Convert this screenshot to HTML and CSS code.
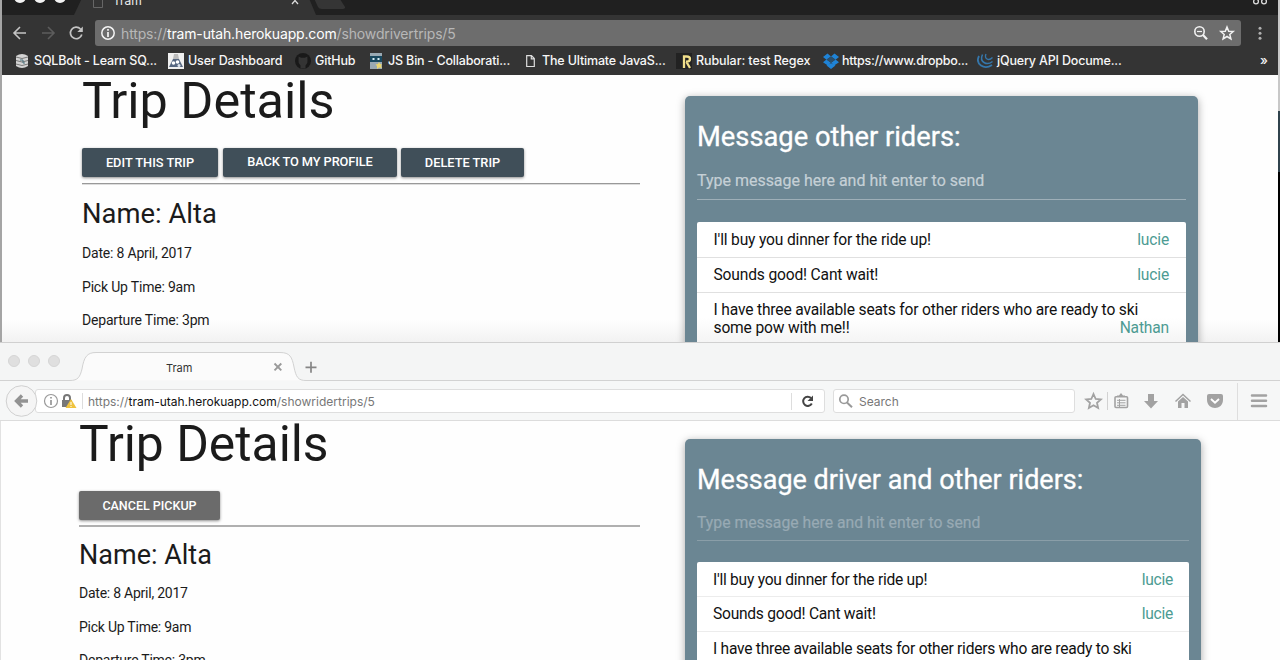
FILE: index.html
```
<!DOCTYPE html>
<html lang="en">
<head>
<meta charset="utf-8">
<title>Tram</title>
<link rel="stylesheet" href="styles.css">
</head>
<body>
<div class="desktop">
  <section class="window driver">
    <div class="edge edge-left"></div>
    <div class="window-body">
      <header class="chrome">
        <div class="chrome-tabs">
          <svg width="1276" height="15" viewBox="2 0 1276 15">
            <path d="M74 15 L83 -4 H308 L316 15Z" fill="#343434"/>
            <path d="M313 -4 H338 L345 7 Q345.500 9 343 9 H322 Q319 9 318 7Z" fill="#353535"/>
            <g fill="#f2f2f2"><circle cx="20" cy="-3" r="6"/><circle cx="40" cy="-3" r="6"/><circle cx="60" cy="-3" r="6"/></g>
            <path d="M93.500 -3 V7.500 H102.500 V-3" fill="none" stroke="#666" stroke-width="1"/>
            <path d="M292 -3 L298 4 M298 -3 L292 4" stroke="#ddd" stroke-width="1.300"/>
            <g fill="none" stroke="#ddd" stroke-width="1.300"><circle cx="1256" cy="1.500" r="2.400"/><circle cx="1264" cy="1.500" r="2.400"/><path d="M1257.500 0 Q1260 -1.500 1262.500 0"/></g>
          </svg>
          <span class="chrome-tab-title">Tram</span>
        </div>
        <div class="chrome-toolbar">
          <svg width="93" height="36" viewBox="2 15 93 36" fill="none" stroke-width="1.600">
            <path d="M26 33 H14.500 M20 27 L14 33 L20 39" stroke="#c4c4c4"/>
            <path d="M42 33 H53.500 M48 27 L54 33 L48 39" stroke="#5c5c5c"/>
            <path d="M80.500 29 A5.800 5.800 0 1 0 81.800 34.500" stroke="#c4c4c4" stroke-width="1.700"/>
            <path d="M82.800 26.500 V32 H77.300Z" fill="#c4c4c4"/>
          </svg>
          <div class="omnibox">
            <svg width="26" height="26" viewBox="0 0 26 26"><circle cx="13" cy="13" r="6.200" fill="none" stroke="#f5f5f5" stroke-width="1.500"/><path d="M13 9 V10.800 M13 12 V17" stroke="#f5f5f5" stroke-width="1.700"/></svg>
            <span class="omni-url">https://<b>tram-utah.herokuapp.com</b>/showdrivertrips/5</span>
            <svg class="omni-actions" width="50" height="26" viewBox="1191 20 50 26" fill="none" stroke="#f2f2f2" stroke-width="1.600">
              <circle cx="1199.500" cy="31.500" r="4.700"/><path d="M1203 35 L1207 39.300" stroke-width="2.200"/><path d="M1197 31.500 H1202" stroke-width="1.200"/>
              <path d="M1227 27 L1228.700 31.200 L1233.200 31.500 L1229.800 34.400 L1230.900 38.900 L1227 36.500 L1223.100 38.900 L1224.200 34.400 L1220.800 31.500 L1225.300 31.200Z" stroke-width="1.500"/>
            </svg>
          </div>
          <svg width="37" height="36" viewBox="1241 15 37 36" fill="#b0b0b0"><circle cx="1260" cy="28.300" r="1.500"/><circle cx="1260" cy="33.300" r="1.500"/><circle cx="1260" cy="38.300" r="1.500"/></svg>
        </div>
        <nav class="bookmarks">
          <a class="bm"><svg width="18" height="16"><path d="M0 3 Q6 -1 12 3 V13 Q6 17 0 13Z" fill="#d4d4d4"/><path d="M0 4 Q6 7 12 4 M0 7.500 Q6 10.500 12 7.500 M0 11 Q6 14 12 11" fill="none" stroke="#777"/><path d="M4 7 H7 V10 H9" fill="none" stroke="#46717c"/></svg><span>SQLBolt - Learn SQ...</span></a>
          <a class="bm"><svg width="20" height="16"><path d="M0 0H16V16H0Z" fill="#f0f0f0"/><path d="M1 14 L5 6 H11 L15 14Z" fill="#566781"/><path d="M6 1H10L11 6H5Z" fill="#bbb"/><circle cx="5.500" cy="10" r="1.800" fill="#fff"/><circle cx="9.500" cy="9" r="1.800" fill="#fff"/><circle cx="11" cy="12.500" r="1.500" fill="#dce3ee"/></svg><span>User Dashboard</span></a>
          <a class="bm"><svg width="20" height="16"><circle cx="8" cy="8" r="8" fill="#191919"/><path d="M5.500 15.500 V12.500 Q3 10.500 3.500 7.500 L3.700 3.500 L6 4.700 H10 L12.300 3.500 L12.500 7.500 Q13 10.500 10.500 12.500 V15.500Z" fill="#343434"/></svg><span>GitHub</span></a>
          <a class="bm"><svg width="18" height="16"><path d="M0 0H12V16H0Z" fill="#99a9b3"/><path d="M0 3H12V9H0Z" fill="#18485f"/><path d="M2.500 5H4.500V7H2.500ZM7.500 5H9.500V7H7.500Z" fill="#d7edf5"/><path d="M9 9 L10 11 L12 11.500 L11 13 L12 15 L9 14.500 L7 16 L7 13 L5.500 11.500 L8 11Z" fill="#ead66e"/></svg><span>JS Bin - Collaborati...</span></a>
          <a class="bm"><svg width="16" height="16"><path d="M.700 2.700 H5.500 L8.300 5.500 V13.500 H.700Z M5.300 2.700 V5.800 H8.300" fill="none" stroke="#ddd" stroke-width="1.200"/></svg><span>The Ultimate JavaS...</span></a>
          <a class="bm rubular"><svg width="20" height="16"><path d="M0 0H16V16H0Z" fill="#222"/><path d="M8 15 V3.500 H10.500 Q14 3.500 14 6 Q14 8.700 10 8.700 M10.500 9 L14 15" fill="none" stroke="#f1df8b" stroke-width="2.300"/></svg><span>Rubular: test Regex</span></a>
          <a class="bm dropbox"><svg width="19" height="16" fill="#1f83d6"><path d="M4.500 .500 L8 3.500 L3.500 6.700 L0 4Z M11.500 .500 L16 4 L12.500 6.700 L8 3.500Z M0 9.300 L3.500 6.500 L8 9.700 L4.500 12.300Z M12.500 6.500 L16 9.300 L11.500 12.300 L8 9.700Z M3.500 12.500 L8 10.300 L12.500 12.500 L8 16Z"/><path d="M3.500 6.500 L8 3.500 L12.500 6.500 L8 9.700Z" fill="#2b4f6c"/></svg><span>https://www.dropbo...</span></a>
          <a class="bm"><svg width="20" height="16" fill="none" stroke="#3577ac"><path d="M2 3 Q-1 9 4 12.500 Q9 16 15 12" stroke-width="1.800"/><path d="M5.500 1.500 Q3 7 7 9.500 Q11 12 15.500 8.500" stroke-width="1.500"/><path d="M9 1 Q7.500 4.500 10 6 Q12.500 7.500 15.500 4.500" stroke-width="1.300"/></svg><span>jQuery API Docume...</span></a>
          <span class="more">»</span>
        </nav>
      </header>
      <main class="page page-driver">
        <div class="trip">
          <h1>Trip Details</h1>
          <div class="actions"><button class="btn edit">EDIT THIS TRIP</button><button class="btn back">BACK TO MY PROFILE</button><button class="btn delete">DELETE TRIP</button></div>
          <hr>
          <h2>Name: Alta</h2>
          <p>Date: 8 April, 2017</p>
          <p>Pick Up Time: 9am</p>
          <p>Departure Time: 3pm</p>
        </div>
        <aside class="card">
          <h3>Message other riders:</h3>
          <div class="field">Type message here and hit enter to send</div>
          <ul class="messages">
            <li><span>I'll buy you dinner for the ride up!</span><em>lucie</em></li>
            <li><span>Sounds good! Cant wait!</span><em>lucie</em></li>
            <li class="long"><span>I have three available seats for other riders who are ready to ski<br>some pow with me!!</span><em>Nathan</em></li>
          </ul>
        </aside>
      </main>
    </div>
    <div class="edge edge-right"></div>
  </section>
  <section class="window rider">
    <header class="firefox">
      <div class="ff-tabs">
        <svg width="1280" height="38" viewBox="0 343 1280 38">
          <path d="M0 380.500 H70 C78 380.500 80 377 82 369 C84 357 87 352.500 96 352.500 H280 C290 352.500 292 357 294 367 C296 377 298 380.500 306 380.500 H1280" fill="#fbfbfb" stroke="#d2d2d2"/>
          <g fill="#dfdfdf" stroke="#d5d5d5"><circle cx="14" cy="361" r="5.500"/><circle cx="34" cy="361" r="5.500"/><circle cx="54" cy="361" r="5.500"/></g>
          <path d="M274.500 363.500 L281.300 370.300 M281.300 363.500 L274.500 370.300" stroke="#9a9a9a" stroke-width="1.900"/>
          <path d="M305.500 367.300 H316.500 M311 361.800 V372.800" stroke="#858585" stroke-width="1.700"/>
        </svg>
        <span class="ff-tab-title">Tram</span>
      </div>
      <div class="ff-toolbar">
        <div class="ff-url">
          <span class="ff-address">https://<b>tram-utah.herokuapp.com</b>/showridertrips/5</span>
          <svg class="ff-reload" width="34" height="24" viewBox="791 389 34 24"><path d="M791.500 393 V410" stroke="#ddd"/><path d="M811 398 A4.600 4.600 0 1 0 811.800 403.500" fill="none" stroke="#444" stroke-width="2"/><path d="M813 395.500 V401 H807.500Z" fill="#444"/></svg>
        </div>
        <svg class="ff-identity" width="86" height="39" viewBox="0 381 86 39">
          <circle cx="21.500" cy="401" r="15.300" fill="#f5f5f5" stroke="#d0d0d0"/>
          <path d="M28 401 H17 M22 395.500 L16.500 401 L22 406.500" fill="none" stroke="#929292" stroke-width="3.300"/>
          <circle cx="51" cy="401" r="6.500" fill="none" stroke="#999" stroke-width="1.200"/><path d="M51 397 V398.500 M51 400 V405" stroke="#888" stroke-width="1.500"/>
          <path d="M64 400 V398 A3 3 0 0 1 70 398 V400" fill="none" stroke="#777" stroke-width="2"/><path d="M62 400H72V407H62Z" fill="#777"/>
          <path d="M71 399 L76.500 408 H65.500Z" fill="#efc33f"/><path d="M71 402 V405 M71 406 V407" stroke="#fff"/>
          <path d="M82.500 393 V409" stroke="#ddd"/>
        </svg>
        <div class="ff-search"><svg width="25" height="22" viewBox="834 390 25 22" fill="none" stroke="#999" stroke-width="1.700"><circle cx="844" cy="399.300" r="4.200"/><path d="M847 402.500 L852 407.300" stroke-width="2"/></svg><span>Search</span></div>
        <svg class="ff-icons" width="205" height="39" viewBox="1075 381 205 39" fill="#a2a2a2">
          <path d="M1093.500 394 L1095.700 399 L1100.800 399.400 L1097 402.800 L1098.100 408 L1093.500 405.300 L1088.900 408 L1090 402.800 L1086.200 399.400 L1091.300 399Z" fill="none" stroke="#a2a2a2" stroke-width="1.800"/>
          <path d="M1107.500 392 V410" stroke="#d2d2d2"/>
          <path d="M1117 395.500 H1119 L1121 393 L1123 395.500 H1125 V397 H1117Z"/><rect x="1115" y="396.800" width="12.500" height="10.700" rx="1" fill="none" stroke="#a2a2a2" stroke-width="1.600"/><path d="M1117 400.300H1125.500M1117 402.800H1125.500M1117 405.300H1125.500M1119.500 399V407" stroke="#a2a2a2" stroke-width="1"/>
          <path d="M1148 394H1154V401H1158L1151 408.500L1144 401H1148Z"/>
          <path d="M1175.500 401.500 L1183 394.500 L1190.500 401.500" fill="none" stroke="#a2a2a2" stroke-width="1.500"/><path d="M1178 401.500 L1183 397 L1188 401.500 V408 H1184.500 V403 H1181.500 V408 H1178Z"/>
          <path d="M1209 394 H1221 Q1223 394 1223 396 V400 C1223 405 1219 408 1215 408 C1211 408 1207 405 1207 400 V396 Q1207 394 1209 394Z"/><path d="M1211 399 L1215 402.700 L1219 399" fill="none" stroke="#fff" stroke-width="1.900"/>
          <path d="M1237.500 383 V420" stroke="#dedede"/><path d="M1252 395.500H1266M1252 400.700H1266M1252 406H1266" stroke="#a2a2a2" stroke-width="2.500" stroke-linecap="round"/>
        </svg>
      </div>
    </header>
    <main class="page page-rider">
      <div class="trip">
        <h1>Trip Details</h1>
        <div class="actions"><button class="btn cancel">CANCEL PICKUP</button></div>
        <hr>
        <h2>Name: Alta</h2>
        <p>Date: 8 April, 2017</p>
        <p>Pick Up Time: 9am</p>
        <p>Departure Time: 3pm</p>
      </div>
      <aside class="card">
        <h3>Message driver and other riders:</h3>
        <div class="field">Type message here and hit enter to send</div>
        <ul class="messages">
          <li><span>I'll buy you dinner for the ride up!</span><em>lucie</em></li>
          <li><span>Sounds good! Cant wait!</span><em>lucie</em></li>
          <li class="long"><span>I have three available seats for other riders who are ready to ski<br>some pow with me!!</span></li>
        </ul>
      </aside>
    </main>
  </section>
</div>
</body>
</html>
```
FILE: styles.css
```
* { box-sizing: border-box; }
body { margin: 0; background: #fff; font-family: Roboto, sans-serif; color: #1b1b1b; }
svg { display: block; flex: none; }
h1, h2, h3, p, ul { margin: 0; padding: 0; font-weight: 400; white-space: nowrap; }
.desktop { width: 1280px; height: 660px; overflow: hidden; }
.window { overflow: hidden; background: #fefefe; }
.driver { display: flex; height: 342px; }
.window-body { width: 1276px; }
.edge { width: 2px; }
.edge-left { background: #a5a5a5; }
.edge-right { background: linear-gradient(#c8c8c8 0 111px, #30434d 111px 172px, #000 172px); }

.chrome { height: 75px; background: #343434; font-family: Inter, sans-serif; }
.chrome-tabs { position: relative; height: 15px; background: #202020; }
.chrome-tab-title { position: absolute; left: 111px; top: -7px; font-size: 12px; line-height: 16px; color: #eee; }
.chrome-toolbar { display: flex; height: 37px; }
.omnibox { display: flex; width: 1146px; height: 26px; margin-top: 5px; background: #6d6d6d; border-radius: 3px; color: #b7b7b7; }
.omni-url { font-size: 14px; line-height: 27px; letter-spacing: -.15px; white-space: nowrap; }
.omni-url b { font-weight: 400; color: #fff; }
.omni-actions { margin-left: auto; }
.bookmarks { display: grid; grid-template-columns: 152px 127px 75px 156px 150px 147px 154px 283px auto; height: 18px; padding-left: 14px; align-items: center; font-size: 12.5px; font-weight: 500; letter-spacing: -.17px; color: #f7f7f7; }
.bm { display: flex; align-items: center; white-space: nowrap; line-height: 18px; }
.bm span { line-height: 16px; padding-bottom: 1px; }
.rubular { letter-spacing: -.08px; }
.dropbox { letter-spacing: -.25px; }
.more { font-size: 13px; line-height: 14px; padding-bottom: 2px; }

.page { display: flex; }
.page-driver { height: 267px; padding-left: 80px; background: linear-gradient(transparent 245px, #f2f2f2 267px); }
.page-rider { height: 239px; padding-left: 78px; border-left: 1px solid #e2e2e2; }
.page-driver .trip { width: 558px; margin-right: 45px; }
.page-rider .trip { width: 561px; margin-right: 45px; }
h1 { font-size: 50.4px; line-height: 52px; }
.actions { display: flex; height: 29px; }
.page-driver .actions { margin-top: 21px; }
.btn { height: 29px; padding: 0; border: 0; border-radius: 2px; background: #404f59; color: #fff; font: 500 12.8px/29px Roboto, sans-serif; box-shadow: 0 1px 3px rgba(0,0,0,.45); white-space: nowrap; }
.edit { width: 136px; }
.back { width: 174px; margin-left: 5px; line-height: 27px; padding-bottom: 2px; letter-spacing: -.1px; }
.delete { width: 123px; margin-left: 4px; }
.cancel { width: 141px; background: #6b6b6b; font-size: 12.5px; }
hr { height: 1px; margin: 6px 0 0; border: 0; background: #999; box-shadow: 0 1px 0 #ddd; }
.page-rider hr { height: 2px; margin-top: 5px; background: #b0b0b0; box-shadow: none; }
h2 { font-size: 27.4px; line-height: 34px; }
.trip p { font-size: 14px; line-height: 18px; letter-spacing: -.19px; }
.page-driver h2 { margin-top: 13px; margin-bottom: 13px; }
.page-driver .trip p { margin-bottom: 15.5px; }
.page-rider h1 { font-size: 49.8px; line-height: 46px; }
.page-rider .actions { margin-top: 24px; }
.page-rider h2 { margin-top: 11px; margin-bottom: 12px; font-size: 27px; }
.page-rider .trip p { margin-bottom: 15.5px; letter-spacing: -.24px; }

.card { flex: none; width: 513px; height: 400px; margin-top: 21px; padding: 24px 12px; background: #6b8693; border-radius: 5px; box-shadow: 0 2px 8px rgba(0,0,0,.35); }
.page-rider .card { width: 516px; margin-top: 18px; }
.card h3 { font-size: 27.3px; line-height: 34px; color: #fff; -webkit-text-stroke: .3px #fff; }
.page-rider .card h3 { font-size: 27px; }
.field { height: 46px; padding-top: 16px; border-bottom: 1px solid #9eafb8; font-size: 15.97px; line-height: 22px; color: #c5d0d6; -webkit-text-stroke: .2px #c5d0d6; white-space: nowrap; }
.page-rider .field { height: 44px; padding-top: 15px; border-color: #8a9ea8; color: #98aab4; font-size: 15.75px; -webkit-text-stroke-color: #98aab4; }
.messages { margin-top: 22px; list-style: none; background: #fff; border-radius: 2px 2px 0 0; }
.page-rider .messages { margin-top: 21px; }
.messages li { display: flex; justify-content: space-between; height: 35px; padding: 8px 17px 0 16.5px; border-bottom: 1px solid #e0e0e0; font-size: 15.6px; letter-spacing: -.17px; line-height: 18px; color: #111; }
.messages li:first-child { height: 36px; padding-top: 9px; }
.page-rider .messages li { height: 34.5px; padding: 8px 16px 0; font-size: 15.6px; letter-spacing: -.26px; border-color: #ececec; }
.page-rider .messages li:first-child { height: 35px; padding-top: 9px; }
.messages em { font-style: normal; color: #4d9b93; }
.messages .long { height: 70px; position: relative; background: linear-gradient(#fff 25px, #f4f4f4 50px); }
.page-rider .messages .long { height: 70px; background: #fff; }
.messages .long em { position: absolute; right: 17px; top: 26px; }

.rider { height: 318px; }
.firefox { height: 79px; background: #f4f5f5; font-family: Inter, sans-serif; border-top: 1px solid #d0d0d0; border-bottom: 1px solid #dcdcdc; }
.ff-tabs { position: relative; height: 38px; }
.ff-tab-title { position: absolute; left: 166px; top: 16px; font-size: 11px; line-height: 18px; color: #333; }
.ff-toolbar { position: relative; display: flex; height: 39px; padding: 8px 0 0 35px; background: #f6f7f7; }
.ff-url { display: flex; width: 790px; height: 24px; padding-left: 52px; background: #fff; border: 1px solid #dedede; border-radius: 3px; }
.ff-url svg { margin: -1px -1px 0 auto; }
.ff-address { font-size: 12px; line-height: 23px; color: #777; white-space: nowrap; }
.ff-address b { color: #111; font-weight: 400; }
.ff-identity { position: absolute; left: 0; top: 0; }
.ff-search { display: flex; width: 242px; height: 24px; margin-left: 8px; background: #fff; border: 1px solid #dedede; border-radius: 3px; font-size: 12px; line-height: 23px; color: #777; }
.ff-icons { margin-top: -8px; }
```
